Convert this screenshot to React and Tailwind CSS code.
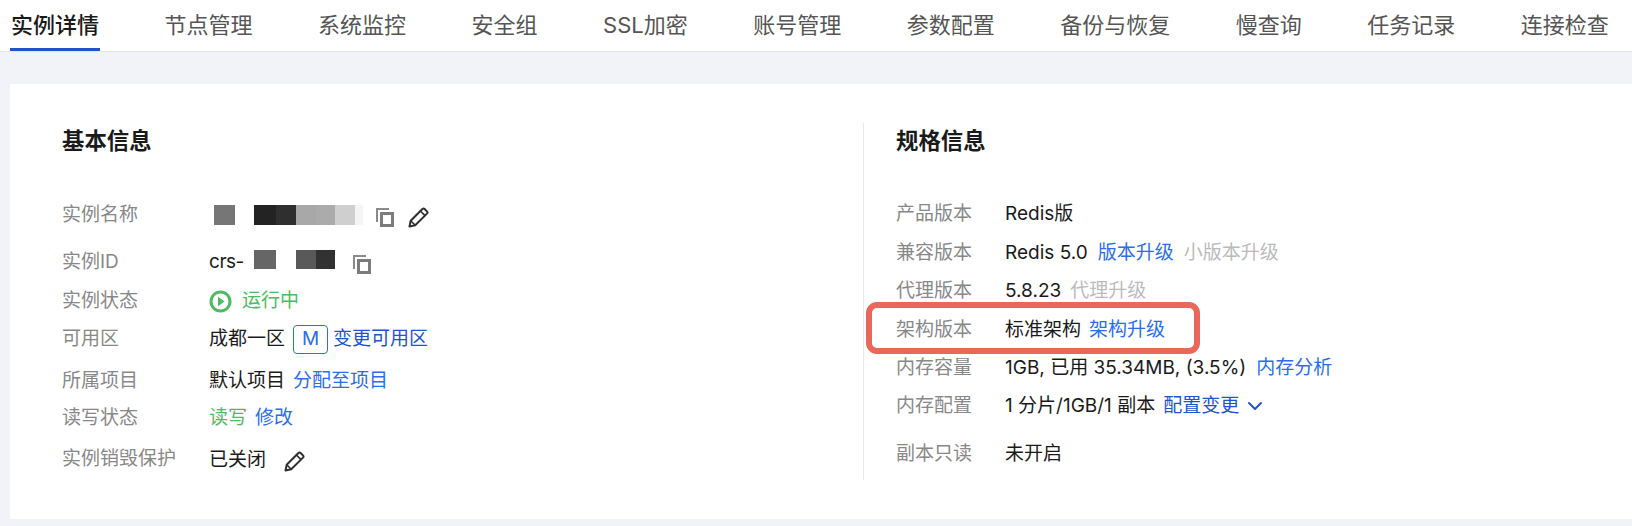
import { ChevronDown } from 'lucide-react';

const TABS = ['节点管理', '系统监控', '安全组', 'SSL加密', '账号管理', '参数配置', '备份与恢复', '慢查询', '任务记录', '连接检查'];

function CopyIcon() {
  return (
    <svg width="18" height="19" viewBox="0 0 18 19" fill="none" className="shrink-0">
      <path d="M1 14V1h12" stroke="#8a8a8a" strokeWidth="2" />
      <rect x="5.5" y="5.5" width="11" height="12" stroke="#7c7c7c" strokeWidth="3" />
    </svg>
  );
}

function PencilIcon() {
  return (
    <svg width="21" height="21" viewBox="0 0 21 21" fill="none" className="shrink-0">
      <path d="M1.5 19.5l1.2-5.7L14.4 2a1.6 1.6 0 0 1 2.2 0l2.4 2.4a1.6 1.6 0 0 1 0 2.2L7.2 18.3z" stroke="#2e2e2e" strokeWidth="2" strokeLinejoin="round" />
      <path d="M12.4 4l4.6 4.6M2.7 13.8l4.5 4.5" stroke="#2e2e2e" strokeWidth="1.6" />
    </svg>
  );
}

function PlayIcon() {
  return (
    <svg width="23" height="23" viewBox="0 0 23 23" fill="none" className="shrink-0">
      <circle cx="11.5" cy="11.5" r="9.5" stroke="#4dbb62" strokeWidth="3" />
      <path d="M9 6.8l6.6 4.7L9 16.2z" fill="#4dbb62" />
    </svg>
  );
}

function Row({ label, className, children }) {
  return (
    <div className={`flex items-center ${className}`}>
      <span className="w-[147px] shrink-0 text-[#888]">{label}</span>
      <div className="flex items-center">{children}</div>
    </div>
  );
}

function SpecRow({ label, className, children }) {
  return (
    <div className={`flex items-center ${className}`}>
      <span className="w-[109px] shrink-0 text-[#888]">{label}</span>
      <div className="flex items-center text-[#1a1a1a]">{children}</div>
    </div>
  );
}

export default function App() {
  return (
    <div className="h-[526px] w-[1632px] overflow-hidden bg-[#f2f3f8] font-['Inter','Noto_Sans_CJK_SC',sans-serif] text-[19px] text-[#1a1a1a]">
      <nav className="flex h-[52px] items-center gap-[65.5px] border-b border-[#e3e5ea] bg-white pl-[11px] text-[22px] text-[#555]">
        <span className="relative flex h-[51px] items-center font-medium text-[#1a1a1a]">
          实例详情
          <span className="absolute -inset-x-[1px] bottom-0 h-[3px] bg-[#2352d1]" />
        </span>
        {TABS.map((t) => (
          <span key={t}>{t}</span>
        ))}
      </nav>

      <main className="relative ml-[10px] mt-[32px] flex h-[435px] bg-white pl-[52px] pt-[39px]">
        <section className="w-[801px]">
          <h2 className="mb-[36px] flex h-[36px] items-center text-[22.4px] font-semibold text-[#1a1a1a]">基本信息</h2>
          <Row label="实例名称" className="h-[40px]">
            <div className="flex items-center">
              <div className="ml-[5px] h-[20px] w-[21px] bg-[#767676]" />
              <div className="ml-[19px] h-[20px] w-[22px] bg-[#232323]" />
              <div className="h-[20px] w-[20px] bg-[#2f2f2f]" />
              <div className="h-[20px] w-[20px] bg-[#a8a8a8]" />
              <div className="h-[20px] w-[19px] bg-[#ababab]" />
              <div className="h-[20px] w-[20px] bg-[#cfcfcf]" />
              <div className="h-[20px] w-[8px] bg-[#f5f5f5]" />
            </div>
            <div className="ml-[13px] translate-y-[2px]"><CopyIcon /></div>
            <div className="ml-[14px] translate-y-[2px]"><PencilIcon /></div>
          </Row>
          <Row label="实例ID" className="mt-[7px] h-[40px]">
            <span className="w-[36px] tracking-tight">crs-</span>
            <div className="ml-[9px] h-[19px] w-[22px] -translate-y-[3px] bg-[#666]" />
            <div className="ml-[20px] h-[19px] w-[20px] -translate-y-[3px] bg-[#595959]" />
            <div className="h-[19px] w-[19px] -translate-y-[3px] bg-[#323232]" />
            <div className="ml-[18px] translate-y-[2px]"><CopyIcon /></div>
          </Row>
          <Row label="实例状态" className="h-[38px]">
            <PlayIcon />
            <span className="ml-[10px] text-[#4dbb62]">运行中</span>
          </Row>
          <Row label="可用区" className="h-[38px]">
            <span>成都一区</span>
            <span className="ml-[8px] flex h-[29px] w-[35px] items-center justify-center rounded-[4px] border border-[#2b6cf0] text-[#2b6cf0]">M</span>
            <span className="ml-[5px] text-[#2352d1]">变更可用区</span>
          </Row>
          <Row label="所属项目" className="h-[46px]">
            <span>默认项目</span>
            <span className="ml-[8px] text-[#2b6cf0]">分配至项目</span>
          </Row>
          <Row label="读写状态" className="h-[28px]">
            <span className="text-[#4dbb62]">读写</span>
            <span className="ml-[8px] text-[#2b6cf0]">修改</span>
          </Row>
          <Row label="实例销毁保护" className="h-[54px]">
            <span className="translate-y-[1px]">已关闭</span>
            <div className="ml-[18px] translate-y-[2px]"><PencilIcon /></div>
          </Row>
        </section>

        <section className="h-[357px] border-l border-[#e8e8e8] pl-[32px]">
          <h2 className="mb-[36px] flex h-[36px] items-center text-[22.4px] font-semibold text-[#1a1a1a]">规格信息</h2>
          <SpecRow label="产品版本" className="h-[38px]">Redis版</SpecRow>
          <SpecRow label="兼容版本" className="mt-[1px] h-[38px]">
            <span>Redis 5.0</span>
            <span className="ml-[10px] text-[#2b6cf0]">版本升级</span>
            <span className="ml-[10px] text-[#bbb]">小版本升级</span>
          </SpecRow>
          <SpecRow label="代理版本" className="h-[38px]">
            <span>5.8.23</span>
            <span className="ml-[9px] text-[#bbb]">代理升级</span>
          </SpecRow>
          <SpecRow label="架构版本" className="mt-[1px] h-[38px]">
            <span>标准架构</span>
            <span className="ml-[8px] text-[#2b6cf0]">架构升级</span>
          </SpecRow>
          <SpecRow label="内存容量" className="h-[38px]">
            <span>1GB, 已用 35.34MB, (3.5%)</span>
            <span className="ml-[10px] text-[#2b6cf0]">内存分析</span>
          </SpecRow>
          <SpecRow label="内存配置" className="h-[38px]">
            <span>1 分片/1GB/1 副本</span>
            <span className="ml-[8px] text-[#2352d1]">配置变更</span>
            <ChevronDown size={24} strokeWidth={2} className="ml-[4px] text-[#2352d1]" />
          </SpecRow>
          <SpecRow label="副本只读" className="mt-[10px] h-[38px]">未开启</SpecRow>
        </section>

        <div className="absolute left-[856px] top-[218px] h-[52px] w-[334px] rounded-[11px] border-[6px] border-[#ea685a]" />
      </main>
    </div>
  );
}
